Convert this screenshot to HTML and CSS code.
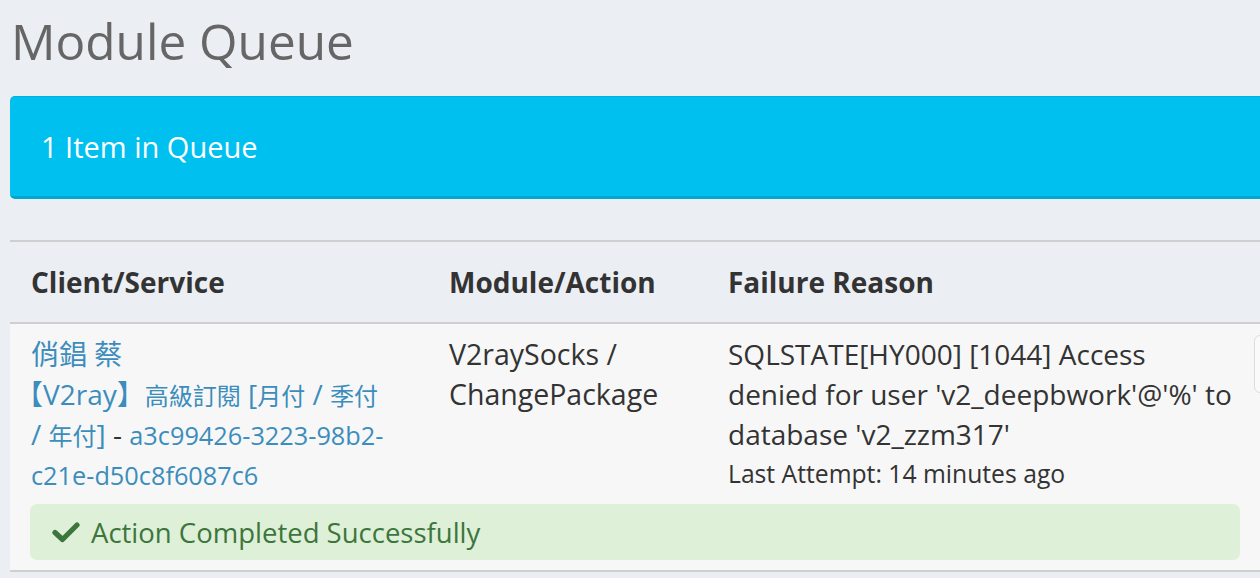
FILE: index.html
```html
<!DOCTYPE html>
<html>
<head>
<meta charset="utf-8">
<link rel="stylesheet" href="styles.css">
</head>
<body>
<div class="page">
  <h1 class="title">Module Queue</h1>
  <div class="info-box">1 Item in Queue</div>
  <table class="queue">
    <thead>
      <tr>
        <th class="c1">Client/Service</th>
        <th class="c2">Module/Action</th>
        <th class="c3">Failure Reason</th>
        <th class="c4"></th>
      </tr>
    </thead>
    <tbody>
      <tr class="item">
        <td class="c1">
          <a class="link" href="#">俏錩 蔡</a><br>
          <a class="link" href="#"><span class="lb">【</span>V2ray】<span class="cjk">高級訂閱</span> [<span class="cjk">月付</span> / <span class="cjk">季付</span> / <span class="cjk">年付</span>]</a> - <a class="link hex" href="#">a3c99426-3223-98b2-c21e-d50c8f6087c6</a>
        </td>
        <td class="c2">V2raySocks / ChangePackage</td>
        <td class="c3">
          <div class="reason">SQLSTATE[HY000] [1044] Access<br>denied for user 'v2_deepbwork'@'%' to database 'v2_zzm317'</div>
          <div class="attempt">Last Attempt: 14 minutes ago</div>
        </td>
        <td class="c4"><button class="btn">Retry</button></td>
      </tr>
      <tr class="result">
        <td colspan="4">
          <div class="alert-success">
            <svg class="check" viewBox="0 0 28 22" width="28" height="22"><path d="M3 11.5 L10.5 18.5 L25 4" fill="none" stroke="#3c763d" stroke-width="5.2" stroke-linecap="round" stroke-linejoin="round"/></svg>
            <span>Action Completed Successfully</span>
          </div>
        </td>
      </tr>
    </tbody>
  </table>
</div>
</body>
</html>
```

FILE: styles.css
```css
html, body {
  margin: 0;
  padding: 0;
  background: #ebeef3;
  overflow: hidden;
}
body {
  font-family: "Open Sans", "Noto Sans CJK TC", sans-serif;
  color: #333;
}
.page {
  width: 1700px;
  padding: 0 10px;
}
.title {
  margin: 0;
  padding-top: 10px;
  font-size: 49.5px;
  line-height: 62px;
  font-weight: 400;
  color: #666;
  padding-left: 1px;
}
.info-box {
  margin-top: 24px;
  height: 103px;
  box-sizing: border-box;
  background: #00c0ef;
  border-top: 1px solid #00b2de;
  border-bottom: 3px solid #00a7d0;
  border-radius: 5px 0 0 5px;
  color: #fff;
  font-size: 29px;
  display: flex;
  align-items: center;
  padding-left: 31px;
}
.queue {
  margin-top: 41px;
  border-collapse: collapse;
  width: 100%;
  font-size: 28px;
  table-layout: fixed;
}
.queue thead tr {
  border-top: 2px solid #cfcfcf;
  border-bottom: 2px solid #cfcfcf;
}
.queue th {
  text-align: left;
  font-weight: 700;
  height: 80px;
  padding: 0 0 0 21px;
  vertical-align: middle;
  font-size: 28px;
}
.c1 { width: 397px; }
.c2 { width: 258px; }
.c3 { width: 526px; }
.queue tbody tr { background: #f7f7f7; }
.item td {
  vertical-align: top;
  padding: 10px 21px 0 21px;
  line-height: 40px;
}
.item td.c1 { padding-right: 38px; }
.item td.c2 { font-size: 28.5px; }
.item td.c3 { padding-right: 4px; }
.item td.c4 { padding: 11px 0 0 0; }
.link {
  color: #3c8dbc;
  text-decoration: none;
}
.c1 .link {
  line-height: 1;
}
.lb {
  margin-left: -16px;
}
.cjk {
  font-size: 24px;
  line-height: 1;
}
.hex {
  font-size: 25.3px;
}
.attempt {
  font-size: 24.7px;
  line-height: 40px;
}
.btn {
  height: 58px;
  padding: 0 20px;
  border: 1px solid #ddd;
  border-radius: 6px;
  background: #fafafa;
  font-family: inherit;
  font-size: 22px;
  color: #444;
}
.result td {
  padding: 10px 0 10px 20px;
  border-bottom: 2px solid #cfcfcf;
}
.alert-success {
  width: 1210px;
  height: 56px;
  box-sizing: border-box;
  background: #dff0d8;
  border-radius: 7px;
  color: #3c763d;
  font-size: 27.5px;
  display: flex;
  align-items: center;
  gap: 11px;
  padding-left: 22px;
}
.check { flex: none; }
```
